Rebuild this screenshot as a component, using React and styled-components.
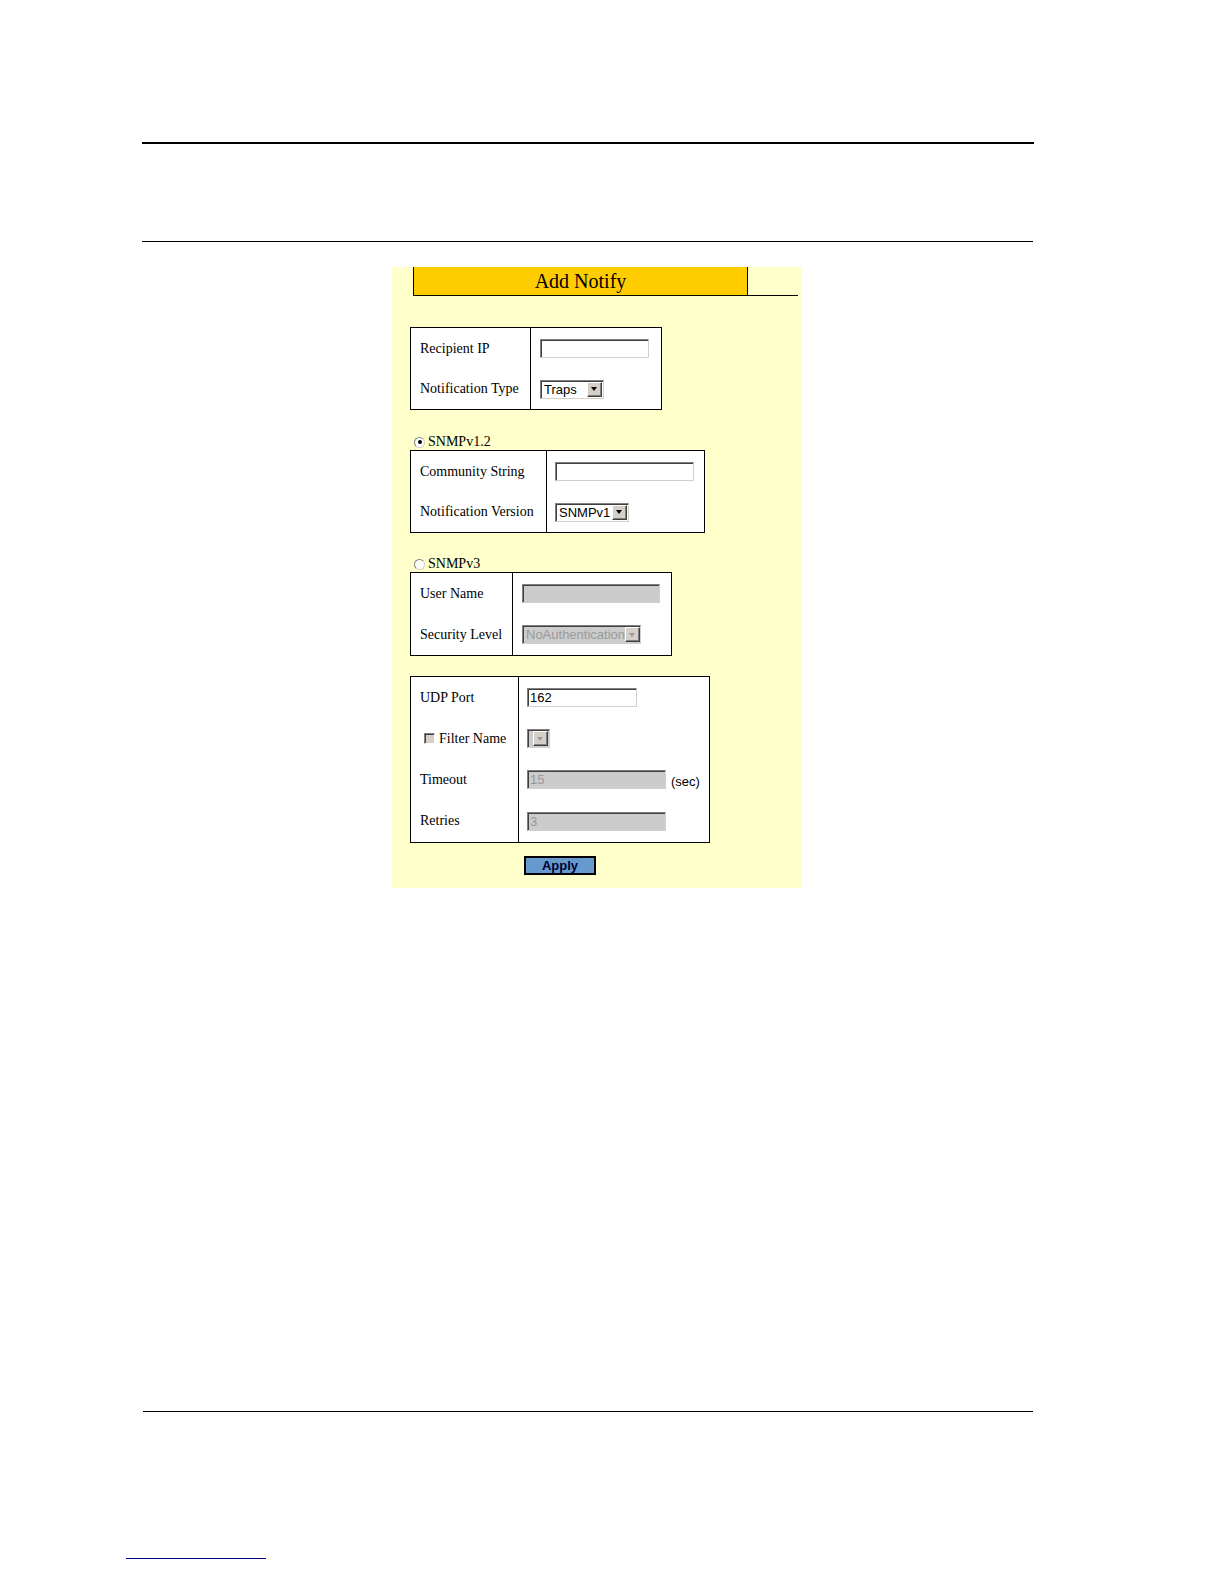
import React from 'react';
import styled, { createGlobalStyle } from 'styled-components';

const GlobalStyle = createGlobalStyle`
    html, body {
        margin: 0;
        padding: 0;
        background: #ffffff;
    }
`;

const Page = styled.div`
    padding-top: 142px;
    font-family: 'Liberation Serif', 'Times New Roman', serif;
    color: #000;
`;

const Rule = styled.div`
    margin-left: ${({ left }) => left}px;
    margin-top: ${({ top }) => top || 0}px;
    width: ${({ width }) => width}px;
    height: ${({ thick }) => thick || 1}px;
    background: ${({ color }) => color || '#000'};
`;

const Panel = styled.div`
    margin: 25px 0 0 392px;
    width: 409px;
    background: #ffffcc;
    padding: 0 0 13px 18px;
    box-sizing: border-box;
    display: flex;
    flex-direction: column;
    align-items: flex-start;
`;

const HeaderRow = styled.div`
    display: flex;
    margin-left: 3px;
`;

const HeaderCell = styled.div`
    width: 335px;
    height: 29px;
    box-sizing: border-box;
    background: #ffcc00;
    border: 1px solid #000;
    border-top: none;
    display: flex;
    align-items: center;
    justify-content: center;
    font-size: 20px;
`;

const HeaderFiller = styled.div`
    width: 50px;
    height: 29px;
    box-sizing: border-box;
    border-bottom: 1px solid #000;
`;

const Table = styled.div`
    display: flex;
    margin-top: ${({ top }) => top || 0}px;
    border: 1px solid #000;
    background: #ffffff;
`;

const Column = styled.div`
    width: ${({ width }) => width}px;
    box-sizing: border-box;
    display: flex;
    flex-direction: column;
    padding-left: ${({ pad }) => pad}px;
    border-left: ${({ divider }) => (divider ? '1px solid #000' : 'none')};
`;

const Row = styled.div`
    height: ${({ h }) => h || 41}px;
    display: flex;
    align-items: center;
    gap: 5px;
`;

const Label = styled.span`
    font-size: 14px;
    white-space: nowrap;
    display: flex;
    align-items: center;
    gap: 4px;
`;

const TextBox = styled.div`
    width: ${({ width }) => width}px;
    height: 19px;
    box-sizing: border-box;
    border-top: 1px solid #808080;
    border-left: 1px solid #808080;
    border-right: 1px solid #d4d0c8;
    border-bottom: 1px solid #d4d0c8;
    box-shadow: inset 1px 1px 0 #404040;
    background: ${({ disabled }) => (disabled ? '#cccccc' : '#ffffff')};
    color: ${({ disabled }) => (disabled ? '#9a9a9a' : '#000')};
    font-family: 'Liberation Sans', Arial, sans-serif;
    font-size: 13px;
    line-height: 17px;
    padding-left: 2px;
`;

const SelectBox = styled(TextBox)`
    display: flex;
    align-items: center;
    justify-content: space-between;
    padding: 0 1px 0 3px;
    overflow: hidden;
    white-space: nowrap;
`;

const ArrowButton = styled.span`
    width: 15px;
    height: 15px;
    flex: none;
    box-sizing: border-box;
    background: #d4d0c8;
    border-top: 1px solid #ffffff;
    border-left: 1px solid #ffffff;
    border-right: 1px solid #404040;
    border-bottom: 1px solid #404040;
    box-shadow: inset -1px -1px 0 #808080;
    display: flex;
    align-items: center;
    justify-content: center;

    &::after {
        content: '';
        border-left: 3.5px solid transparent;
        border-right: 3.5px solid transparent;
        border-top: 4px solid ${({ disabled }) => (disabled ? '#9a9a9a' : '#000')};
        margin-left: -1px;
    }
`;

const RadioLine = styled.div`
    margin: ${({ top }) => top}px 0 0 4px;
    height: 16px;
    display: flex;
    align-items: center;
    gap: 3px;
    font-size: 14px;
`;

const Radio = styled.span`
    width: 11px;
    height: 11px;
    box-sizing: border-box;
    border-radius: 50%;
    border: 1px solid #808080;
    border-right-color: #d4d0c8;
    border-bottom-color: #d4d0c8;
    background: #ffffff;
    display: flex;
    align-items: center;
    justify-content: center;

    &::after {
        content: '';
        width: 4px;
        height: 4px;
        border-radius: 50%;
        background: ${({ checked }) => (checked ? '#000' : 'transparent')};
    }
`;

const Checkbox = styled.span`
    width: 11px;
    height: 11px;
    margin-left: 4px;
    box-sizing: border-box;
    background: #d4d0c8;
    border-top: 1px solid #808080;
    border-left: 1px solid #808080;
    border-right: 1px solid #ffffff;
    border-bottom: 1px solid #ffffff;
    box-shadow: inset 1px 1px 0 #404040;
`;

const Unit = styled.span`
    font-family: 'Liberation Sans', Arial, sans-serif;
    font-size: 13px;
    padding-top: 3px;
`;

const ButtonBar = styled.div`
    width: 300px;
    margin-top: 13px;
    display: flex;
    justify-content: center;
`;

const ApplyButton = styled.button`
    width: 72px;
    height: 19px;
    padding: 0;
    box-sizing: border-box;
    border: 2px solid #000;
    background: #6699cc;
    color: #000033;
    font-family: 'Liberation Sans', Arial, sans-serif;
    font-weight: bold;
    font-size: 13px;
    line-height: 15px;
`;

const Select = ({ value, width, disabled }) => (
    <SelectBox width={width} disabled={disabled}>
        <span>{value}</span>
        <ArrowButton disabled={disabled} />
    </SelectBox>
);

const App = () => (
    <Page>
        <GlobalStyle />
        <Rule left={142} width={892} thick={2} />
        <Rule left={142} width={891} top={97} />
        <Panel>
            <HeaderRow>
                <HeaderCell>Add Notify</HeaderCell>
                <HeaderFiller />
            </HeaderRow>

            <Table top={31}>
                <Column width={119} pad={9}>
                    <Row><Label>Recipient IP</Label></Row>
                    <Row h={40}><Label>Notification Type</Label></Row>
                </Column>
                <Column width={131} pad={9} divider>
                    <Row><TextBox width={109} /></Row>
                    <Row h={40}><Select value="Traps" width={64} /></Row>
                </Column>
            </Table>

            <RadioLine top={24}>
                <Radio checked />
                SNMPv1.2
            </RadioLine>
            <Table>
                <Column width={135} pad={9}>
                    <Row><Label>Community String</Label></Row>
                    <Row h={40}><Label>Notification Version</Label></Row>
                </Column>
                <Column width={158} pad={8} divider>
                    <Row><TextBox width={139} /></Row>
                    <Row h={40}><Select value="SNMPv1" width={74} /></Row>
                </Column>
            </Table>

            <RadioLine top={23}>
                <Radio />
                SNMPv3
            </RadioLine>
            <Table>
                <Column width={101} pad={9}>
                    <Row><Label>User Name</Label></Row>
                    <Row h={41}><Label>Security Level</Label></Row>
                </Column>
                <Column width={159} pad={9} divider>
                    <Row><TextBox width={138} disabled /></Row>
                    <Row h={41}><Select value="NoAuthentication" width={119} disabled /></Row>
                </Column>
            </Table>

            <Table top={20}>
                <Column width={107} pad={9}>
                    <Row><Label>UDP Port</Label></Row>
                    <Row>
                        <Label>
                            <Checkbox />
                            Filter Name
                        </Label>
                    </Row>
                    <Row><Label>Timeout</Label></Row>
                    <Row h={42}><Label>Retries</Label></Row>
                </Column>
                <Column width={191} pad={8} divider>
                    <Row><TextBox width={110}>162</TextBox></Row>
                    <Row><Select value="" width={23} disabled /></Row>
                    <Row>
                        <TextBox width={139} disabled>15</TextBox>
                        <Unit>(sec)</Unit>
                    </Row>
                    <Row h={42}><TextBox width={139} disabled>3</TextBox></Row>
                </Column>
            </Table>

            <ButtonBar>
                <ApplyButton type="button">Apply</ApplyButton>
            </ButtonBar>
        </Panel>
        <Rule left={143} width={890} top={523} />
        <Rule left={126} width={140} top={146} color="#000080" />
    </Page>
);

export default App;
